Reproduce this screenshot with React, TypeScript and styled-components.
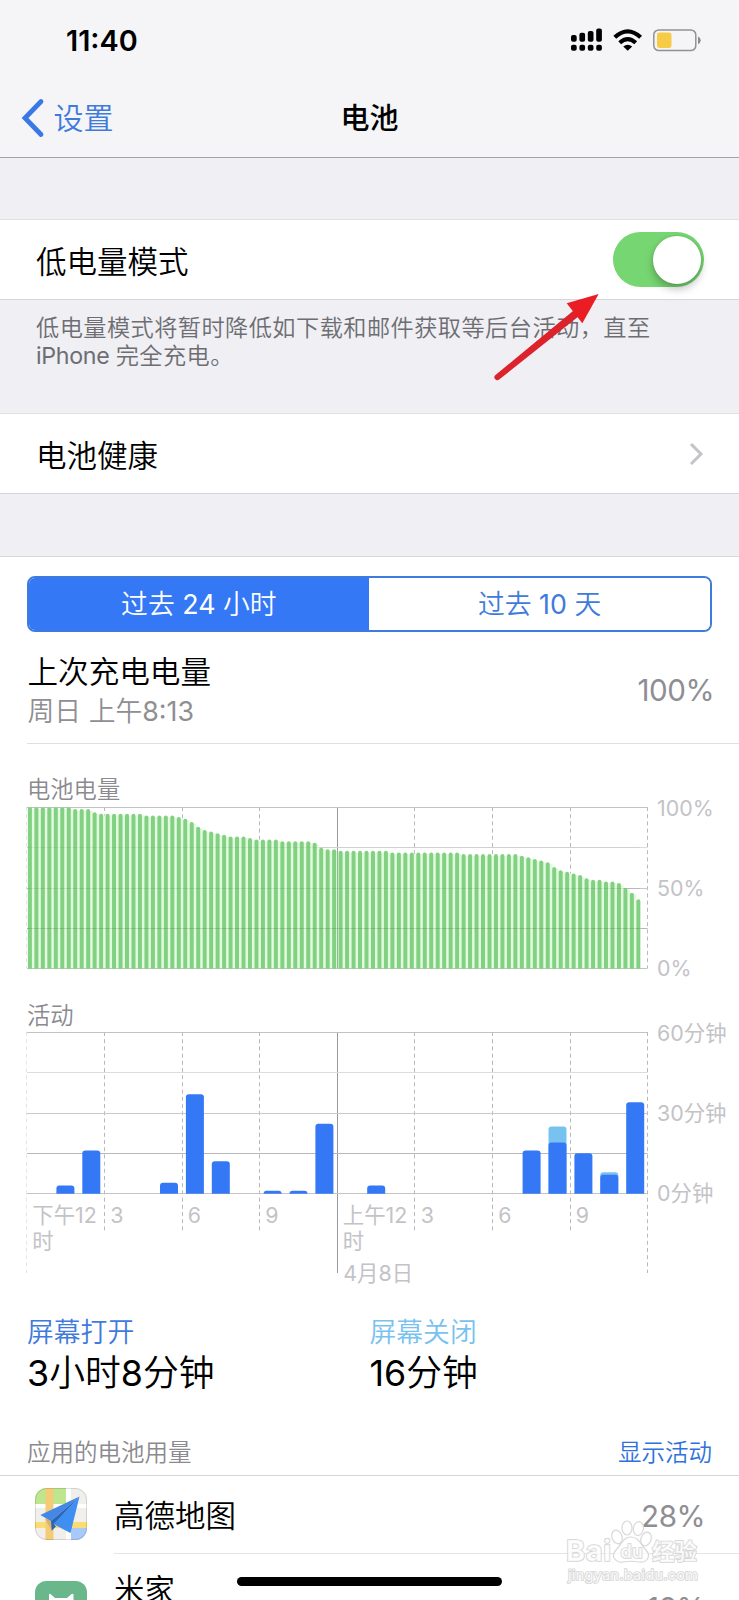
import React from "react";
import styled, { createGlobalStyle } from "styled-components";

const FONT = `"Inter", "Noto Sans CJK SC", sans-serif`;
const BLUE = "#3478f6";
const LIGHT_BLUE = "#78c2f0";

const GlobalStyle = createGlobalStyle`
  * { box-sizing: border-box; }
  body { margin: 0; background: #fff; overflow: hidden; font-family: ${FONT}; color: #000; }
`;

const Screen = styled.main`
  position: relative;
  width: 739px;
  height: 1600px;
  overflow: hidden;
  display: flex;
  flex-direction: column;
  background: #efeff4;
  & > * { flex-shrink: 0; }
`;

const Header = styled.header`
  height: 158px;
  background: #f5f5f7;
  border-bottom: 1px solid #a3a4aa;
`;

const StatusBar = styled.div`
  height: 79px;
  padding: 2px 38px 0 66px;
  display: flex;
  align-items: center;
  justify-content: space-between;
`;

const Clock = styled.span`
  font-size: 28.8px;
  line-height: 40px;
  font-weight: 600;
`;

const StatusIcons = styled.svg`
  display: block;
  width: 131px;
  height: 26px;
  margin-bottom: 1.4px;
`;

const NavBar = styled.nav`
  height: 78px;
  padding: 0 21px;
  display: grid;
  grid-template-columns: 1fr auto 1fr;
  align-items: center;
`;

const BackLink = styled.a`
  display: flex;
  align-items: center;
  gap: 8.5px;
  color: #3f7bdc;
  font-size: 30px;
  line-height: 40px;
  font-weight: 350;
`;

const Title = styled.h1`
  margin: 0;
  padding-top: 1px;
  font-size: 29px;
  line-height: 40px;
  font-weight: 500;
`;

const Gap = styled.div<{ $h: number }>`
  height: ${(p) => p.$h}px;
`;

const Cell = styled.div`
  height: 81px;
  padding: 0 35px 0 36px;
  display: flex;
  align-items: center;
  justify-content: space-between;
  background: #fff;
  border-top: 1px solid #e0e0e3;
  border-bottom: 1px solid #d6d6da;
`;

const CellLabel = styled.span`
  padding-top: 5px;
  font-size: 30.5px;
  line-height: 40px;
  font-weight: 350;
`;

const Switch = styled.div`
  width: 91px;
  height: 55px;
  margin-right: 0.5px;
  padding: 4px 3px 4px 4px;
  display: flex;
  justify-content: flex-end;
  border-radius: 28px;
  background: #76d672;
`;

const Knob = styled.div`
  width: 48px;
  height: 48px;
  border-radius: 50%;
  background: #fff;
  box-shadow: 0 5px 9px rgba(0, 0, 0, 0.25), 0 0 3px rgba(0, 0, 0, 0.12);
`;

const Note = styled.p`
  height: 113px;
  margin: 0;
  padding: 13.8px 0 0 36px;
  font-size: 23.2px;
  line-height: 28.6px;
  letter-spacing: 0.45px;
  font-weight: 350;
  color: #6d6d72;
  white-space: nowrap;
`;

const Num = styled.span<{ $spacing?: number }>`
  font-weight: 400;
  letter-spacing: ${(p) => p.$spacing ?? 0}px;
`;

const Panel = styled.section`
  height: 1044px;
  background: #fff;
  border-top: 1px solid #d8d8dc;
`;

const Segmented = styled.div`
  height: 55.5px;
  margin: 19px 27px 0 26.5px;
  display: grid;
  grid-template-columns: 1fr 1fr;
  border: 2px solid #3f7bdc;
  border-radius: 8px;
  overflow: hidden;
`;

const Segment = styled.button<{ $on?: boolean }>`
  border: 0;
  padding: 0;
  font: 350 26.8px/53px ${FONT};
  color: ${(p) => (p.$on ? "#fff" : "#3f7bdc")};
  background: ${(p) => (p.$on ? BLUE : "#fff")};
`;

const Summary = styled.div`
  height: 112.5px;
  margin-left: 27px;
  padding: 20.5px 25px 0 0.5px;
  display: flex;
  justify-content: space-between;
  border-bottom: 1px solid #e0e0e3;
`;

const SummaryName = styled.div`
  font-size: 30.6px;
  line-height: 40px;
  font-weight: 350;
`;

const SummaryTime = styled.div`
  font-size: 26.8px;
  line-height: 39px;
  font-weight: 350;
  color: #8e8e93;
`;

const Percent = styled.span<{ $shift?: number }>`
  padding-top: ${(p) => p.$shift ?? 0}px;
  font-size: 29.6px;
  line-height: 40px;
  letter-spacing: -0.5px;
  font-weight: 380;
  color: #8e8e93;
`;

const ChartTitle = styled.h2<{ $top: number }>`
  margin: 0;
  padding: ${(p) => p.$top}px 0 0 27px;
  font-size: 23.3px;
  line-height: 31px;
  font-weight: 350;
  color: #8a8a8f;
`;

const Chart = styled.svg`
  display: block;
  overflow: visible;
  text { font: 400 21.4px ${FONT}; fill: #c3c3c7; }
`;

const Totals = styled.div`
  display: grid;
  grid-template-columns: 342.5px 1fr;
  padding-left: 27px;
`;

const TotalLabel = styled.div<{ $color: string }>`
  padding-top: 0.5px;
  font-size: 26.8px;
  line-height: 40px;
  font-weight: 350;
  color: ${(p) => p.$color};
`;

const TotalValue = styled.div`
  padding-bottom: 0.5px;
  font-size: 35.8px;
  line-height: 42px;
  font-weight: 350;
`;

const ListHeader = styled.div`
  height: 82px;
  padding: 0 27px;
  display: flex;
  align-items: flex-end;
  justify-content: space-between;
  border-bottom: 1px solid #d5d5d9;
  font-size: 23.5px;
  line-height: 45px;
  font-weight: 350;
  color: #8a8a8f;
`;

const HeaderLink = styled.a`
  color: #2f72dc;
`;

const AppRow = styled.div<{ $h: number }>`
  height: ${(p) => p.$h}px;
  padding-left: 35px;
  display: grid;
  grid-template-columns: 79px 1fr;
  align-items: center;
`;

const AppIcon = styled.svg`
  display: block;
  width: 52px;
  height: 52px;
  margin-bottom: 1.5px;
`;

const AppBody = styled.div`
  height: 100%;
  padding-right: 34px;
  display: flex;
  align-items: center;
  justify-content: space-between;
  border-bottom: 1px solid #e4e4e7;
`;

const AppName = styled.span<{ $lift?: number }>`
  padding: 3px 0 ${(p) => p.$lift ?? 0}px;
  font-size: 30.5px;
  line-height: 40px;
  font-weight: 350;
`;

const HomeBar = styled.div`
  position: absolute;
  left: 237px;
  top: 1577px;
  width: 265px;
  height: 9px;
  border-radius: 5px;
  background: #000;
`;

const Arrow = styled.svg`
  position: absolute;
  left: 490px;
  top: 290px;
`;

const Watermark = styled.svg`
  position: absolute;
  left: 560px;
  top: 1515px;
  text {
    font-family: ${FONT};
    fill: #fff;
    fill-opacity: 0.8;
    stroke: #d6d6d6;
    stroke-width: 1.6px;
    paint-order: stroke;
  }
`;

/* [level in percent, number of quarter-hour samples] */
const LEVEL_RUNS: [number, number][] = [
  [100, 7], [99, 3], [97, 1], [96, 7], [95, 5], [94, 1], [93, 1], [91, 1], [88, 1], [86, 1],
  [85, 1], [84, 1], [83, 1], [82, 3], [81, 1], [80, 4], [79, 5], [78, 1], [75, 1], [74, 2],
  [73, 8], [72, 11], [71, 9], [70, 1], [69, 1], [68, 1], [67, 1], [66, 1], [63, 1], [61, 1],
  [60, 1], [59, 1], [58, 1], [56, 1], [55, 2], [54, 2], [53, 1], [50, 1], [47, 1], [43, 1],
];
const LEVELS = LEVEL_RUNS.flatMap(([v, n]) => Array<number>(n).fill(v));

/* [hour slot, minutes with screen on, minutes in total] */
const ACTIVITY: [number, number, number][] = [
  [1, 3, 3], [2, 16, 16], [5, 4, 4], [6, 37, 37], [7, 12, 12], [9, 1, 1], [10, 1, 1],
  [11, 26, 26], [13, 3, 3], [19, 16, 16], [20, 19, 25], [21, 15, 15], [22, 7, 8], [23, 34, 34],
];

const X0 = 27;
const SLOT = 77.58;
const PLOT_H = 161;
const GRID_COLORS = ["#c2c2c5", "#dcdcdf", "#c8c8cb", "#b9b9bd", "#c4c4c7"];
const OVERLAY_OPACITY = [0, 0.07, 0.1, 0.17, 0];

const topRounded = (x: number, y: number, w: number, h: number, r: number) => {
  const k = Math.min(r, h);
  return `M${x} ${y + h}V${y + k}Q${x} ${y} ${x + k} ${y}H${x + w - k}Q${x + w} ${y} ${x + w} ${y + k}V${y + h}Z`;
};

function HorizontalGrid({ overlay = false }: { overlay?: boolean }) {
  return (
    <g>
      {GRID_COLORS.map((c, i) => (
        <rect
          key={i}
          x={X0}
          y={Math.round((PLOT_H / 4) * i)}
          width={SLOT * (overlay ? 7.9 : 8)}
          height={1}
          fill={overlay ? "#333" : c}
          opacity={overlay ? OVERLAY_OPACITY[i] : 1}
        />
      ))}
    </g>
  );
}

function VerticalGrid({ tail = 0, endTail = 0 }: { tail?: number; endTail?: number }) {
  return (
    <g>
      {Array.from({ length: 9 }, (_, i) => {
        const x = i === 0 ? X0 - 0.5 : Math.floor(X0 + SLOT * i) + 0.5;
        const edge = i % 4 === 0;
        const mid = i === 4;
        return (
          <line
            key={i}
            x1={x}
            x2={x}
            y1={0}
            y2={PLOT_H + (edge ? endTail : tail)}
            stroke={mid ? "#98989c" : i === 0 ? "#e6e6e8" : "#b9b9bd"}
            strokeWidth={1}
            strokeDasharray={mid ? undefined : "4 3.2"}
          />
        );
      })}
    </g>
  );
}

function BatteryChart() {
  return (
    <Chart width="739" height="180">
      <g transform="translate(0 2)">
        <VerticalGrid />
        <HorizontalGrid />
        {LEVELS.map((v, i) => {
          const h = (PLOT_H * v) / 100;
          const x = 27.9 + i * 6.473;
          const last = i === LEVELS.length - 1;
          return (
            <g key={i}>
              {!last && <rect x={x} y={PLOT_H - h + 2} width={6.5} height={h - 2} fill="#e2fadd" />}
              <path d={topRounded(x, PLOT_H - h + 0.4, 4, h + 0.4, v === 100 ? 0 : 2)} fill="#82d183" />
            </g>
          );
        })}
        <HorizontalGrid overlay />
        <rect x={337} y={44} width={1} height={PLOT_H - 44} fill="#6b9a73" opacity={0.7} />
        <text x="657" y="8.500">100%</text>
        <text x="657" y="89">50%</text>
        <text x="657" y="169.400">0%</text>
      </g>
    </Chart>
  );
}

function ActivityChart() {
  return (
    <Chart width="739" height="280">
      <g transform="translate(0 1)">
        <VerticalGrid tail={40} endTail={80} />
        <HorizontalGrid />
        {ACTIVITY.map(([slot, on, total]) => {
          const x = 30.5 + slot * 25.9;
          const tall = (total * PLOT_H) / 60;
          const h = (on * PLOT_H) / 60;
          return (
            <g key={slot}>
              {total > on && <path d={topRounded(x, PLOT_H - tall + 0.6, 18, tall, 3)} fill={LIGHT_BLUE} />}
              <path d={topRounded(x, PLOT_H - h + 0.5, 18, h + 0.3, 3)} fill={BLUE} />
            </g>
          );
        })}
        <text x="657" y="8.600">60分钟</text>
        <text x="657" y="89">30分钟</text>
        <text x="657" y="169.400">0分钟</text>
        {[0, 1].map((half) => (
          <g key={half} transform={`translate(${half * 310.5} 0)`}>
            <text x="32.300" y="191.200">{half ? "上午" : "下午"}12</text>
            <text x="32.300" y="217.300">时</text>
            <text x="110.300" y="191.200">3</text>
            <text x="187.800" y="191.200">6</text>
            <text x="265.300" y="191.200">9</text>
          </g>
        ))}
        <text x="343.300" y="249">4月8日</text>
      </g>
    </Chart>
  );
}

function MapsIcon() {
  return (
    <AppIcon viewBox="0 0 52 52">
      <defs>
        <clipPath id="maps"><rect width="52" height="52" rx="11.5" /></clipPath>
      </defs>
      <g clipPath="url(#maps)">
        <rect width="52" height="52" fill="#f1efec" />
        <rect width="31" height="16" fill="#bde68e" />
        <path d="M31 0H36V52H31ZM0 16H52V20H0Z" fill="#fff" />
        <path d="M36 40H52V52H36Z" fill="#a9c8fb" />
        <path d="M0 34H52V40H0Z" fill="#fbdc70" />
        <path d="M10.500 0H18.500V52H10.500Z" fill="#f6cb78" />
        <path d="M10 31L17 43L20 37L35 45L38 34Z" fill="#877d68" opacity=".3" />
        <path d="M44.500 8.500L5.300 27L16 33Z" fill="#4488e6" />
        <path d="M44.500 8.500L16 33L16.800 42.800L21 38.500L19 36.500Z" fill="#2b65b5" />
        <path d="M44.500 8.500L18.500 36L35.500 45Z" fill="#3f8ff2" />
      </g>
      <rect x=".5" y=".5" width="51" height="51" rx="11" fill="none" stroke="#000" strokeOpacity=".13" />
    </AppIcon>
  );
}

function MiHomeIcon() {
  return (
    <AppIcon viewBox="0 0 52 52">
      <rect width="52" height="52" rx="11.500" fill="#69b78b" />
      <path d="M14 13.500C14 12.500 15 12.500 16 13.500L20 17H32L36 13.500C37 12.500 38.500 12.500 38.500 13.500V38H14Z" fill="#fff" />
    </AppIcon>
  );
}

export default function App() {
  return (
    <Screen>
      <GlobalStyle />
      <Header>
        <StatusBar>
          <Clock>11:40</Clock>
          <StatusIcons viewBox="570 27 131 26">
            {[35, 32.8, 31, 28.6].map((y, i) => (
              <g key={y}>
                <rect x={571 + i * 8.4} y={y} width="5.700" height={41.8 - y} rx="2" />
                <rect x={571 + i * 8.4} y="44.700" width="5.700" height="6" rx="2" />
              </g>
            ))}
            <g fill="none" stroke="#000" strokeWidth="4.200">
              <path d="M614.800 37.300Q627.700 25.500 640.600 37.300" />
              <path d="M619.700 42.800Q627.700 35.500 635.700 42.800" />
            </g>
            <path d="M623.200 46.400Q627.700 43 632.200 46.400L627.700 50.800Z" />
            <rect x="653.800" y="29.900" width="42" height="20.700" rx="5" fill="none" stroke="#929294" strokeWidth="1.500" />
            <rect x="657" y="32.600" width="14.500" height="15.300" rx="2.600" fill="#f6cc46" />
            <path d="M698 36.500Q700.700 37.500 700.700 40.200T698 44Z" fill="#8b8b8d" />
          </StatusIcons>
        </StatusBar>
        <NavBar>
          <BackLink>
            <svg width="24" height="40" viewBox="0 0 24 40">
              <path d="M20 3.500L4 20L20 36.500" fill="none" stroke="#3b78e7" strokeWidth="4.800" strokeLinecap="round" strokeLinejoin="miter" />
            </svg>
            <span>设置</span>
          </BackLink>
          <Title>电池</Title>
        </NavBar>
      </Header>

      <Gap $h={61} />
      <Cell>
        <CellLabel>低电量模式</CellLabel>
        <Switch><Knob /></Switch>
      </Cell>
      <Note>
        低电量模式将暂时降低如下载和邮件获取等后台活动，直至
        <br />
        <Num $spacing={-0.3}>iPhone </Num>完全充电。
      </Note>
      <Cell>
        <CellLabel>电池健康</CellLabel>
        <svg width="16" height="26" viewBox="0 0 16 26">
          <path d="M3 3L13 13L3 23" fill="none" stroke="#c4c4c8" strokeWidth="3" />
        </svg>
      </Cell>
      <Gap $h={62} />

      <Panel>
        <Segmented>
          <Segment $on>过去 <Num>24</Num> 小时</Segment>
          <Segment>过去 <Num>10</Num> 天</Segment>
        </Segmented>
        <Summary>
          <div>
            <SummaryName>上次充电电量</SummaryName>
            <SummaryTime>周日 上午<Num>8:13</Num></SummaryTime>
          </div>
          <Percent $shift={18}>100%</Percent>
        </Summary>

        <ChartTitle $top={30}>电池电量</ChartTitle>
        <BatteryChart />
        <ChartTitle $top={15}>活动</ChartTitle>
        <ActivityChart />

        <Totals>
          <div>
            <TotalLabel $color="#3f7bdc">屏幕打开</TotalLabel>
            <TotalValue><Num>3</Num>小时<Num>8</Num>分钟</TotalValue>
          </div>
          <div>
            <TotalLabel $color={LIGHT_BLUE}>屏幕关闭</TotalLabel>
            <TotalValue><Num>16</Num>分钟</TotalValue>
          </div>
        </Totals>

        <ListHeader>
          <span>应用的电池用量</span>
          <HeaderLink>显示活动</HeaderLink>
        </ListHeader>
        <AppRow $h={78}>
          <MapsIcon />
          <AppBody>
            <AppName>高德地图</AppName>
            <Percent $shift={2}>28%</Percent>
          </AppBody>
        </AppRow>
        <AppRow $h={107}>
          <MiHomeIcon />
          <AppBody>
            <AppName $lift={38}>米家</AppName>
            <Percent $shift={2}>18%</Percent>
          </AppBody>
        </AppRow>
      </Panel>

      <Arrow width="112" height="92">
        <path d="M5.500 85L83.600 20.600L88.400 26.400L9.200 89.500A2.900 2.900 0 0 1 5.500 85Z" fill="#dc222b" />
        <path d="M108.700 4L76.700 13.300L92.300 33.300Z" fill="#ea1d25" />
      </Arrow>
      <HomeBar />
      <Watermark width="150" height="75">
        <text x="6" y="46" fontSize="29" fontWeight="700" textLength="45">Bai</text>
        <g fill="#fff" fillOpacity=".75" stroke="#d8d8d8" strokeWidth="1.200">
          <ellipse cx="57" cy="22" rx="5" ry="7" transform="rotate(-20 57 22)" />
          <ellipse cx="67" cy="13" rx="5" ry="7" />
          <ellipse cx="78.500" cy="13.500" rx="5" ry="7" transform="rotate(8 78 13)" />
          <ellipse cx="86" cy="24" rx="5" ry="7" transform="rotate(20 86 24)" />
          <path d="M71 22C79 22 81 30 86 35C92 42 86 48 79 47C74 46 69 46 64 47C56 48 50 42 56 35C62 29 63 22 71 22Z" />
        </g>
        <text x="60.500" y="43" fontSize="18" fontWeight="600">du</text>
        <text x="92" y="45" fontSize="22.500" fontWeight="700">经验</text>
        <text x="8" y="65" fontSize="14.500" fontWeight="500" textLength="130">jingyan.baidu.com</text>
      </Watermark>
    </Screen>
  );
}
